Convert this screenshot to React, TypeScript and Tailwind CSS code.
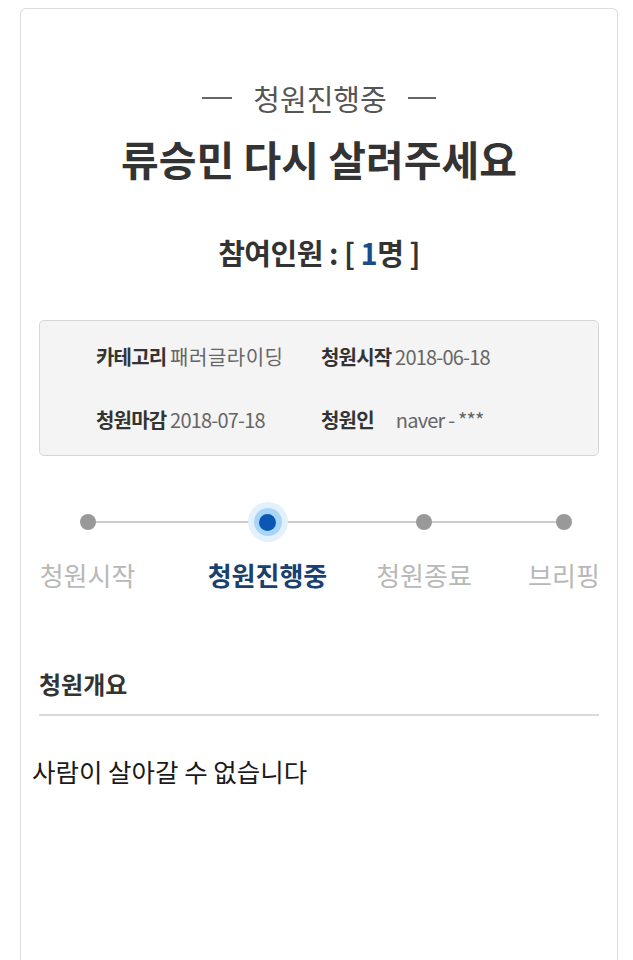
import React from "react";

const font = { fontFamily: '"Noto Sans CJK KR", "Noto Sans", sans-serif' };

function Step({ label, active, width, ml }: { label: string; active?: boolean; width: string; ml: string }) {
  return (
    <div className={`flex flex-col items-center ${width} ${ml} relative z-10`}>
      <div className="h-[40px] w-[40px] flex items-center justify-center">
        {active ? (
          <div className="h-[40px] w-[40px] rounded-full bg-[#e3f1fd] flex items-center justify-center">
            <div className="h-[28px] w-[28px] rounded-full bg-[#a9d5f7] flex items-center justify-center">
              <div className="h-[17px] w-[17px] rounded-full bg-[#0a58b4]" />
            </div>
          </div>
        ) : (
          <div className="h-[16px] w-[16px] rounded-full bg-[#999999]" />
        )}
      </div>
      <div
        className={`mt-[17px] h-[32px] leading-[32px] text-[26px] whitespace-nowrap ${
          active ? "font-bold text-[#1b3f6e]" : "text-[#b8b8b8]"
        }`}
      >
        {label}
      </div>
    </div>
  );
}

export default function App() {
  return (
    <div className="min-h-screen bg-white pt-[8px] px-[20px]" style={font}>
      <div className="w-[598px] min-h-[952px] border border-b-0 border-[#dcdcdc] rounded-t-[6px] bg-white">
        <div className="mt-[71px] h-[36px] flex items-center justify-center gap-[21px] text-[29px] leading-[36px] text-[#555555]">
          <span className="block w-[30px] h-[2px] bg-[#666666]" />
          <span>청원진행중</span>
          <span className="block w-[28px] h-[2px] bg-[#666666]" />
        </div>
        <div className="mt-[18px] h-[48px] text-center text-[41px] leading-[48px] font-bold text-[#333333]">
          류승민 다시 살려주세요
        </div>
        <div className="mt-[52px] h-[36px] text-center text-[29px] leading-[36px] font-bold text-[#333333] tracking-[-0.5px]">
          참여인원 : [ <span className="text-[#1a4c8c]">1</span>명 ]
        </div>

        <div className="mt-[50px] ml-[18px] w-[560px] h-[136px] rounded-[5px] border border-[#d6d6d6] bg-[#f4f4f4] pl-[56px] pt-[22px] text-[20px] leading-[28px] tracking-[-0.8px]">
          <div className="flex h-[28px]">
            <div className="w-[225px] whitespace-nowrap">
              <span className="font-bold text-[#333333]">카테고리</span>{" "}
              <span className="text-[#666666] tracking-[0.5px]">패러글라이딩</span>
            </div>
            <div className="whitespace-nowrap">
              <span className="font-bold text-[#333333]">청원시작</span>{" "}
              <span className="text-[#666666]">2018-06-18</span>
            </div>
          </div>
          <div className="flex h-[28px] mt-[35px]">
            <div className="w-[225px] whitespace-nowrap">
              <span className="font-bold text-[#333333]">청원마감</span>{" "}
              <span className="text-[#666666]">2018-07-18</span>
            </div>
            <div className="whitespace-nowrap">
              <span className="font-bold text-[#333333]">청원인</span>
              <span className="text-[#666666] ml-[22px]">naver - ***</span>
            </div>
          </div>
        </div>

        <div className="relative mt-[46px] ml-[19px] flex">
          <div className="absolute left-[47px] top-[19px] w-[476px] h-[2px] bg-[#cccccc]" />
          <Step label="청원시작" width="w-[95px]" ml="ml-0" />
          <Step label="청원진행중" active width="w-[121px]" ml="ml-[72px]" />
          <Step label="청원종료" width="w-[96px]" ml="ml-[48px]" />
          <Step label="브리핑" width="w-[72px]" ml="ml-[56px]" />
        </div>

        <div className="mt-[78px] ml-[18px] w-[560px] border-b-2 border-[#d9d9d9] pb-[15px]">
          <div className="h-[30px] leading-[30px] text-[24px] font-bold text-[#333333]">청원개요</div>
        </div>

        <div className="mt-[39px] ml-[11px] h-[32px] leading-[32px] text-[25.5px] text-[#1a1a1a]">
          사람이 살아갈 수 없습니다
        </div>
      </div>
    </div>
  );
}
